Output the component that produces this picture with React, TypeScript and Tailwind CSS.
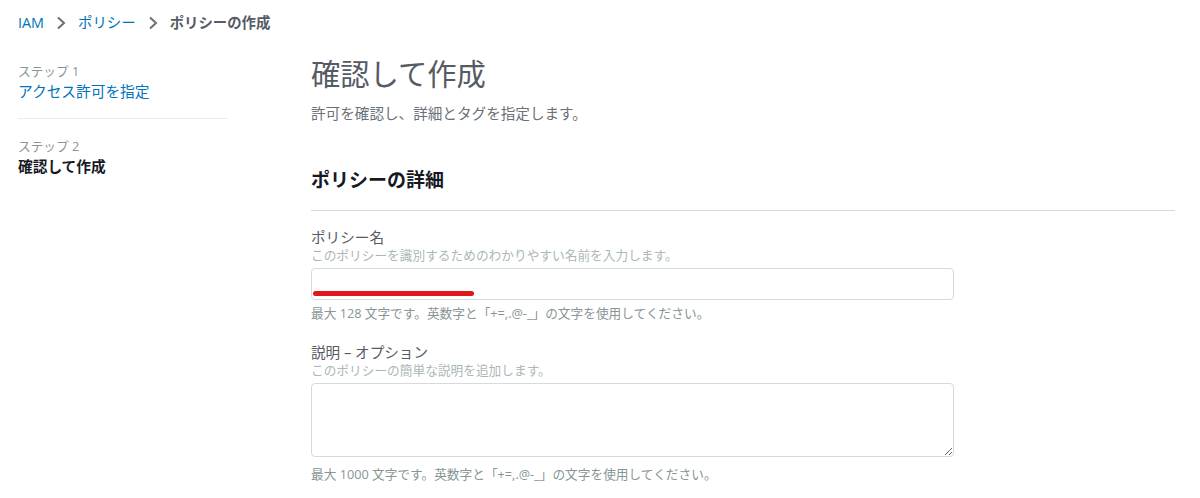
import React from "react";

const font = { fontFamily: '"Open Sans", "Noto Sans CJK JP", sans-serif' };

function Chevron() {
  return (
    <svg width="10" height="14" viewBox="0 0 10 14" className="mx-[12px]">
      <path d="M2 1.5 L8 7 L2 12.5" fill="none" stroke="#687078" strokeWidth="2" />
    </svg>
  );
}

export default function App() {
  return (
    <div className="w-[1200px] h-[498px] bg-white overflow-hidden text-[#545b64]" style={font}>
      <div className="flex items-center pl-[18px] pt-[12px] h-[22px] text-[14.4px] leading-[22px] box-content">
        <span className="text-[#0073bb]">IAM</span>
        <Chevron />
        <span className="text-[#0073bb]">ポリシー</span>
        <Chevron />
        <span className="font-bold text-[#545b64]">ポリシーの作成</span>
      </div>
      <div className="flex">
        <div className="w-[228px] pl-[18px] pt-[29px] shrink-0">
          <div className="text-[12.7px] leading-[16px] text-[#879596]">ステップ 1</div>
          <div className="text-[14.7px] leading-[20px] text-[#0073bb] mt-[2px]">アクセス許可を指定</div>
          <div className="h-px bg-[#eaeded] mt-[17px] mb-[19px]" />
          <div className="text-[12.7px] leading-[16px] text-[#879596]">ステップ 2</div>
          <div className="text-[14.7px] leading-[20px] font-bold text-[#16191f] mt-[2px]">確認して作成</div>
        </div>
        <div className="ml-[83px] w-[864px] pt-[20px]">
          <h1 className="text-[29.3px] leading-[40px] text-[#545b64]">確認して作成</h1>
          <p className="text-[14.6px] leading-[20px] text-[#687078] mt-[9px]">許可を確認し、詳細とタグを指定します。</p>
          <h2 className="text-[19px] leading-[24px] font-bold text-[#16191f] mt-[45px]">ポリシーの詳細</h2>
          <div className="h-px bg-[#d5dbdb] mt-[18px]" />
          <div className="mt-[16px] text-[14.6px] leading-[20px] text-[#545b64]">ポリシー名</div>
          <div className="text-[12.7px] leading-[16px] text-[#aab7b8]">このポリシーを識別するためのわかりやすい名前を入力します。</div>
          <div className="relative mt-[5px] w-[643px] h-[32px] border border-[#d5dbdb] rounded-[4px]">
            <div className="absolute left-[1px] top-[22px] w-[161px] h-[5px] rounded-full bg-[#e0161b]" />
          </div>
          <div className="mt-[5px] text-[12.7px] leading-[16px] text-[#879596]">最大 128 文字です。英数字と「+=,.@-_」の文字を使用してください。</div>
          <div className="mt-[21px] text-[14.6px] leading-[20px] text-[#545b64]">説明 – オプション</div>
          <div className="text-[12.7px] leading-[16px] text-[#aab7b8]">このポリシーの簡単な説明を追加します。</div>
          <textarea className="block mt-[5px] w-[643px] h-[74px] border border-[#d5dbdb] rounded-[4px] resize-y outline-none" />
          <div className="mt-[9px] text-[12.7px] leading-[16px] text-[#879596]">最大 1000 文字です。英数字と「+=,.@-_」の文字を使用してください。</div>
        </div>
      </div>
    </div>
  );
}
